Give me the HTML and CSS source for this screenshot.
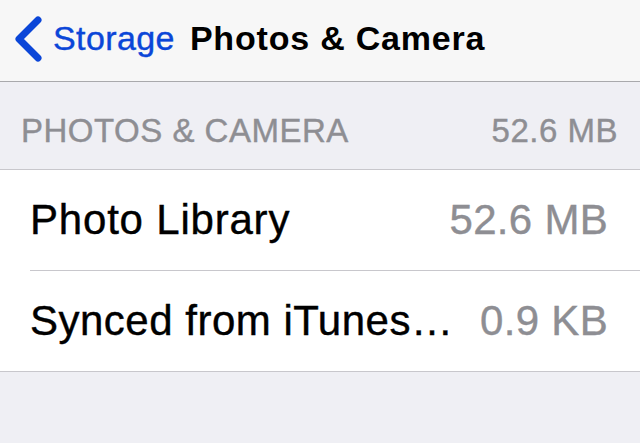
FILE: index.html
```html
<!DOCTYPE html>
<html>
<head>
<meta charset="utf-8">
<link rel="stylesheet" href="styles.css">
</head>
<body>
<div class="nav">
  <div class="back">
    <svg class="chev" width="32" height="46" viewBox="0 0 32 46"><path d="M26 4 L7 23 L26 42" fill="none" stroke="#0b46d8" stroke-width="7" stroke-linecap="round" stroke-linejoin="round"/></svg>
    <span class="back-label">Storage</span>
  </div>
  <div class="title">Photos &amp; Camera</div>
</div>
<div class="section-head">
  <span>PHOTOS &amp; CAMERA</span>
  <span>52.6 MB</span>
</div>
<div class="list">
  <div class="row"><span class="label">Photo Library</span><span class="value">52.6 MB</span></div>
  <div class="row"><span class="label tight">Synced from iTunes…</span><span class="value">0.9 KB</span></div>
</div>
</body>
</html>
```
FILE: styles.css
```css
html, body { margin: 0; padding: 0; }
body {
  width: 640px;
  height: 443px;
  background: #efeff4;
  font-family: "Liberation Sans", Arial, sans-serif;
  overflow: hidden;
}
.nav {
  height: 81px;
  background: #f7f7f7;
  border-bottom: 1px solid #a9a9ac;
  display: flex;
  align-items: center;
}
.back {
  display: flex;
  align-items: center;
  padding-left: 12px;
  color: #0b46d8;
}
.chev { display: block; margin-top: -4px; }
.back-label {
  font-size: 34px;
  margin-left: 9px;
  margin-top: -4px;
  letter-spacing: 0.4px;
  -webkit-text-stroke: 0.4px currentColor;
}
.title {
  font-size: 34px;
  font-weight: bold;
  color: #000;
  margin-left: 15px;
  margin-top: -4px;
  letter-spacing: 0.8px;
}
.section-head {
  display: flex;
  justify-content: space-between;
  align-items: center;
  padding: 10px 22px 0 21px;
  color: #8e8e93;
  font-size: 33px;
  letter-spacing: 0.5px;
  -webkit-text-stroke: 0.4px currentColor;
  border-bottom: 1px solid #c8c7cc;
  box-sizing: border-box;
  height: 88px;
}
.list {
  background: #fff;
  border-bottom: 1px solid #c8c7cc;
}
.row {
  height: 100px;
  margin-left: 30px;
  padding-right: 32px;
  display: flex;
  justify-content: space-between;
  align-items: center;
  font-size: 42px;
  -webkit-text-stroke: 0.4px currentColor;
}
.row + .row { border-top: 1px solid #c8c7cc; height: 101px; box-sizing: border-box; }
.label { color: #000; letter-spacing: 0.8px; }
.label.tight { letter-spacing: 0.5px; }
.value { color: #8e8e93; letter-spacing: 0.3px; }
```
